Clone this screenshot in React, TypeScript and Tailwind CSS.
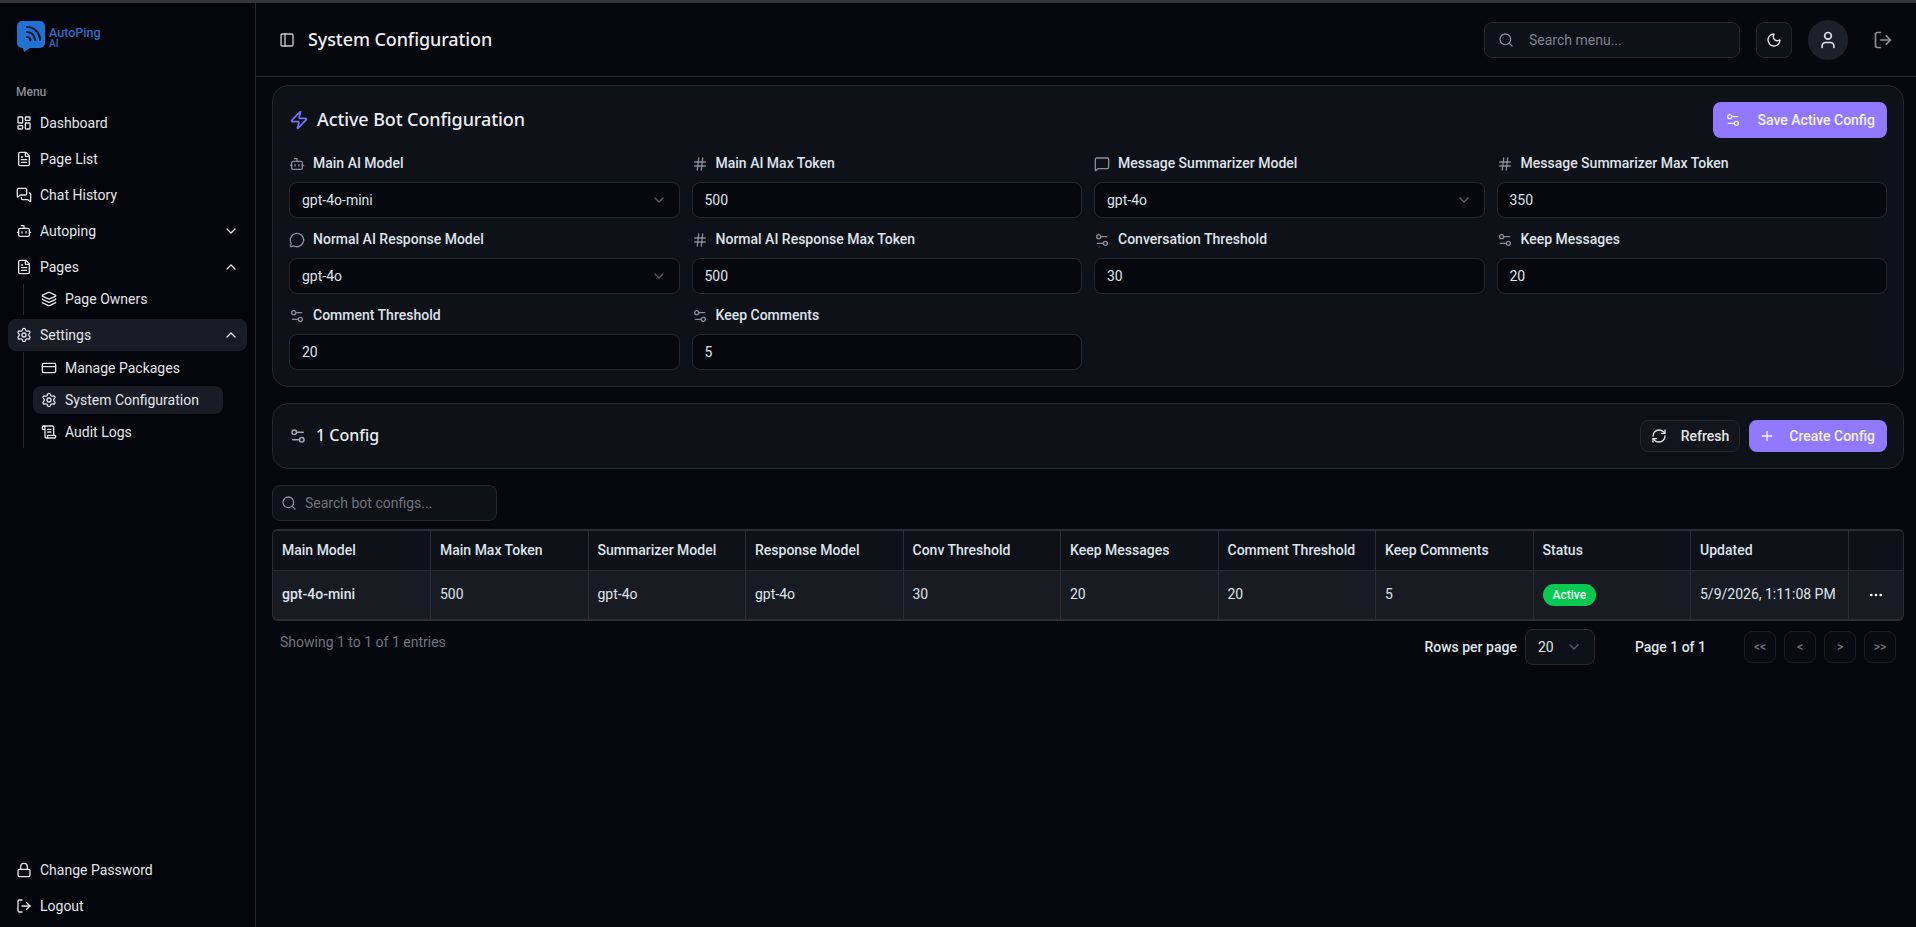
import {
  Bot,
  ChevronDown,
  ChevronUp,
  CreditCard,
  Ellipsis,
  FileText,
  Hash,
  Layers,
  LayoutDashboard,
  Lock,
  LogOut,
  LucideIcon,
  MessageCircle,
  MessageSquare,
  MessagesSquare,
  Moon,
  PanelLeft,
  Plus,
  RefreshCw,
  ScrollText,
  Search,
  Settings,
  Settings2,
  User,
  Zap,
} from 'lucide-react'

const fields: { icon: LucideIcon; label: string; value: string; select?: boolean }[] = [
  { icon: Bot, label: 'Main AI Model', value: 'gpt-4o-mini', select: true },
  { icon: Hash, label: 'Main AI Max Token', value: '500' },
  { icon: MessageSquare, label: 'Message Summarizer Model', value: 'gpt-4o', select: true },
  { icon: Hash, label: 'Message Summarizer Max Token', value: '350' },
  { icon: MessageCircle, label: 'Normal AI Response Model', value: 'gpt-4o', select: true },
  { icon: Hash, label: 'Normal AI Response Max Token', value: '500' },
  { icon: Settings2, label: 'Conversation Threshold', value: '30' },
  { icon: Settings2, label: 'Keep Messages', value: '20' },
  { icon: Settings2, label: 'Comment Threshold', value: '20' },
  { icon: Settings2, label: 'Keep Comments', value: '5' },
]

const columns = [
  'Main Model',
  'Main Max Token',
  'Summarizer Model',
  'Response Model',
  'Conv Threshold',
  'Keep Messages',
  'Comment Threshold',
  'Keep Comments',
  'Status',
  'Updated',
]

const cells = ['500', 'gpt-4o', 'gpt-4o', '30', '20', '20', '5']

function NavItem({
  icon: Icon,
  label,
  open,
  active,
}: {
  icon: LucideIcon
  label: string
  open?: boolean
  active?: boolean
}) {
  return (
    <div
      className={`flex h-8 items-center gap-2 rounded-lg px-2 text-sm text-[#e3e5ea] ${active ? 'bg-[#1a1c25]' : ''}`}
    >
      <Icon className="size-4 shrink-0" />
      <span className="flex-1">{label}</span>
      {open === true && <ChevronUp className="size-4" />}
      {open === false && <ChevronDown className="size-4" />}
    </div>
  )
}

function SubItem({ icon: Icon, label, active }: { icon: LucideIcon; label: string; active?: boolean }) {
  return (
    <div
      className={`flex h-7 items-center gap-2 rounded-lg px-2 text-sm text-[#e3e5ea] ${active ? 'bg-[#1a1c25]' : ''}`}
    >
      <Icon className="size-4 shrink-0" />
      <span>{label}</span>
    </div>
  )
}

function Sidebar() {
  return (
    <aside className="flex w-[256px] shrink-0 flex-col border-r border-[#24272f] bg-[#04050a]">
      <div className="flex h-[72px] items-start pl-[17px] pt-[18px]">
        <svg viewBox="0 0 28 31" className="h-[31px] w-7">
          <path
            d="M5 0h18a5 5 0 0 1 5 5v17a5 5 0 0 1-5 5H13l-6 4-1-4H5a5 5 0 0 1-5-5V5a5 5 0 0 1 5-5z"
            fill="#2272d4"
          />
          <g fill="none" stroke="#0b1a2e" strokeWidth="2.2" strokeLinecap="round">
            <path d="M10 6a13 13 0 0 1 13 13" />
            <path d="M10 11a8 8 0 0 1 8 8" />
            <path d="M10 16a3.5 3.5 0 0 1 3.5 3.5" />
          </g>
        </svg>
        <div className="ml-1 mt-[5px] flex flex-col text-[12.5px] font-medium leading-[13px] text-[#2a6fc4]">
          <span>AutoPing</span>
          <span className="text-[10px] leading-[10px]">AI</span>
        </div>
      </div>

      <div className="flex flex-1 flex-col px-2 pb-[5px] pt-[9px]">
        <div className="px-2 text-xs font-medium leading-4 text-[#8a8d96]">Menu</div>
        <nav className="mt-[7px] flex flex-col gap-1">
          <NavItem icon={LayoutDashboard} label="Dashboard" />
          <NavItem icon={FileText} label="Page List" />
          <NavItem icon={MessagesSquare} label="Chat History" />
          <NavItem icon={Bot} label="Autoping" open={false} />
          <div>
            <NavItem icon={FileText} label="Pages" open />
            <div className="ml-[15px] mr-6 mt-px flex flex-col gap-1 border-l border-[#24272f] pb-0.5 pl-[9px] pt-px">
              <SubItem icon={Layers} label="Page Owners" />
            </div>
          </div>
          <div>
            <NavItem icon={Settings} label="Settings" open active />
            <div className="ml-[15px] mr-6 mt-px flex flex-col gap-1 border-l border-[#24272f] pb-0.5 pl-[9px] pt-0.5">
              <SubItem icon={CreditCard} label="Manage Packages" />
              <SubItem icon={Settings} label="System Configuration" active />
              <SubItem icon={ScrollText} label="Audit Logs" />
            </div>
          </div>
        </nav>
        <div className="mt-auto flex flex-col gap-1">
          <NavItem icon={Lock} label="Change Password" />
          <NavItem icon={LogOut} label="Logout" />
        </div>
      </div>
    </aside>
  )
}

function Header() {
  return (
    <header className="flex h-[74px] shrink-0 items-center border-b border-[#24272f] pl-[23px] pr-[23px]">
      <PanelLeft className="size-4 text-[#c9ccd3]" />
      <h1 className="mb-0.5 ml-[13px] font-['Noto_Sans',sans-serif] text-lg font-medium tracking-[-0.1px] text-[#eceef2]">
        System Configuration
      </h1>
      <div className="ml-auto flex h-9 w-64 items-center gap-[15px] rounded-lg border border-[#24272f] bg-[#0e1118] pl-[13px]">
        <Search className="size-4 text-[#8a8d96]" />
        <span className="text-sm text-[#7d818c]">Search menu...</span>
      </div>
      <button className="ml-4 flex size-9 items-center justify-center rounded-lg border border-[#24272f] bg-[#0e1118] text-[#e3e5ea]">
        <Moon className="size-4" />
      </button>
      <button className="ml-4 flex size-10 items-center justify-center rounded-full bg-[#1d2028] text-[#e3e5ea]">
        <User className="size-5" />
      </button>
      <LogOut className="ml-[25px] size-5 text-[#8a8d96]" />
    </header>
  )
}

function Field({ icon: Icon, label, value, select }: (typeof fields)[number]) {
  return (
    <div className="flex flex-col gap-2">
      <label className="flex h-5 items-center gap-2 text-sm font-medium text-[#dfe3ea]">
        <Icon className="size-4 shrink-0 text-[#8a8d96]" />
        <span className="mb-0.5">{label}</span>
      </label>
      <div className="flex h-9 items-center justify-between rounded-lg border border-[#24272f] bg-[#07080d] px-3 text-sm text-[#dfe3ea]">
        <span>{value}</span>
        {select && <ChevronDown className="size-4 text-[#5a5d67]" />}
      </div>
    </div>
  )
}

function ActiveCard() {
  return (
    <section className="rounded-2xl border border-[#24272f] bg-[#0e1118] p-4">
      <div className="mb-4 flex h-9 items-center">
        <Zap className="size-5 text-[#7a6ff0]" />
        <h2 className="mb-0.5 ml-2 font-['Noto_Sans',sans-serif] text-lg font-medium tracking-[-0.1px] text-[#eceef2]">
          Active Bot Configuration
        </h2>
        <button className="ml-auto flex h-9 items-center gap-[17px] rounded-lg bg-[#9179ff] px-3 text-sm font-medium text-[#f3f1ff]">
          <Settings2 className="size-4" />
          Save Active Config
        </button>
      </div>
      <div className="grid grid-cols-4 gap-3">
        {fields.map((f) => (
          <Field key={f.label} {...f} />
        ))}
      </div>
    </section>
  )
}

function ConfigCard() {
  return (
    <section className="flex items-center rounded-2xl border border-[#24272f] bg-[#0e1118] p-4">
      <Settings2 className="size-[18px] text-[#a5a8b0]" />
      <h2 className="mb-0.5 ml-[9px] font-['Noto_Sans',sans-serif] text-base font-medium text-[#eceef2]">1 Config</h2>
      <button className="ml-auto flex h-8 items-center gap-3.5 rounded-lg border border-[#24272f] bg-[#13151c] pl-2.5 pr-2.5 text-sm font-medium text-[#e3e5ea]">
        <RefreshCw className="size-4" />
        Refresh
      </button>
      <button className="ml-[9px] flex h-8 items-center gap-3.5 rounded-lg bg-[#9179ff] pl-2.5 pr-3 text-sm font-medium text-[#f3f1ff]">
        <Plus className="size-4" />
        Create Config
      </button>
    </section>
  )
}

function ConfigTable() {
  return (
    <div className="overflow-hidden rounded-md border-x border-y-2 border-[#2a2d35]">
      <table className="w-full table-fixed border-collapse text-sm text-[#dfe3ea]">
        <colgroup>
          {columns.map((c) => (
            <col key={c} className="w-[157.5px]" />
          ))}
          <col />
        </colgroup>
        <thead className="bg-[#0e1118]">
          <tr className="h-[39px] border-b border-[#2a2d35]">
            {columns.map((c) => (
              <th key={c} className="border-r border-[#2a2d35] pl-[9px] pr-2 text-left font-medium">
                {c}
              </th>
            ))}
            <th />
          </tr>
        </thead>
        <tbody className="bg-[#191b23]">
          <tr className="h-[49px]">
            <td className="border-r border-[#2a2d35] pb-0.5 pl-[9px] pr-2 font-medium">gpt-4o-mini</td>
            {cells.map((c, i) => (
              <td key={i} className="border-r border-[#2a2d35] pb-0.5 pl-[9px] pr-2">
                {c}
              </td>
            ))}
            <td className="border-r border-[#2a2d35] pl-[9px] pr-2">
              <span className="inline-flex h-[22px] items-center rounded-full bg-[#07c951] px-2.5 text-xs font-medium text-[#eafff1]">
                Active
              </span>
            </td>
            <td className="border-r border-[#2a2d35] pb-0.5 pl-[9px] pr-2">5/9/2026, 1:11:08 PM</td>
            <td className="text-center">
              <Ellipsis className="mx-auto size-4 text-white" />
            </td>
          </tr>
        </tbody>
      </table>
    </div>
  )
}

function Pagination() {
  return (
    <div className="mt-2 flex items-start justify-between pl-2 pr-2">
      <span className="mt-[3px] text-sm text-[#6f737e]">Showing 1 to 1 of 1 entries</span>
      <div className="flex items-center">
        <span className="text-sm font-medium text-[#dfe3ea]">Rows per page</span>
        <div className="ml-2 flex h-9 w-[70px] items-center gap-3 rounded-lg border border-[#24272f] bg-[#0e1118] px-3 text-sm text-[#dfe3ea]">
          20
          <ChevronDown className="size-4 text-[#5a5d67]" />
        </div>
        <span className="ml-10 text-sm font-medium text-[#dfe3ea]">Page 1 of 1</span>
        <div className="ml-[38px] flex gap-2">
          {['<<', '<', '>', '>>'].map((s) => (
            <button
              key={s}
              className="flex size-8 items-center justify-center rounded-lg border border-[#1b1d24] bg-[#0a0b11] text-xs font-medium text-[#6a6e78]"
            >
              {s}
            </button>
          ))}
        </div>
      </div>
    </div>
  )
}

export default function App() {
  return (
    <div className="flex h-[927px] w-[1916px] flex-col overflow-hidden bg-[#07080d] font-['Roboto',sans-serif]">
      <div className="h-[3px] shrink-0 bg-[#33353a]" />
      <div className="flex min-h-0 flex-1">
        <Sidebar />
        <main className="flex min-w-0 flex-1 flex-col">
          <Header />
          <div className="flex flex-col pl-4 pr-3 pt-2">
            <ActiveCard />
            <div className="mt-4">
              <ConfigCard />
            </div>
            <div className="mt-4 flex h-9 w-[225px] items-center gap-2 rounded-lg border border-[#24272f] bg-[#0e1118] px-2">
              <Search className="size-4 text-[#8a8d96]" />
              <span className="text-sm text-[#6f737e]">Search bot configs...</span>
            </div>
            <div className="mt-2">
              <ConfigTable />
            </div>
            <Pagination />
          </div>
        </main>
      </div>
    </div>
  )
}
